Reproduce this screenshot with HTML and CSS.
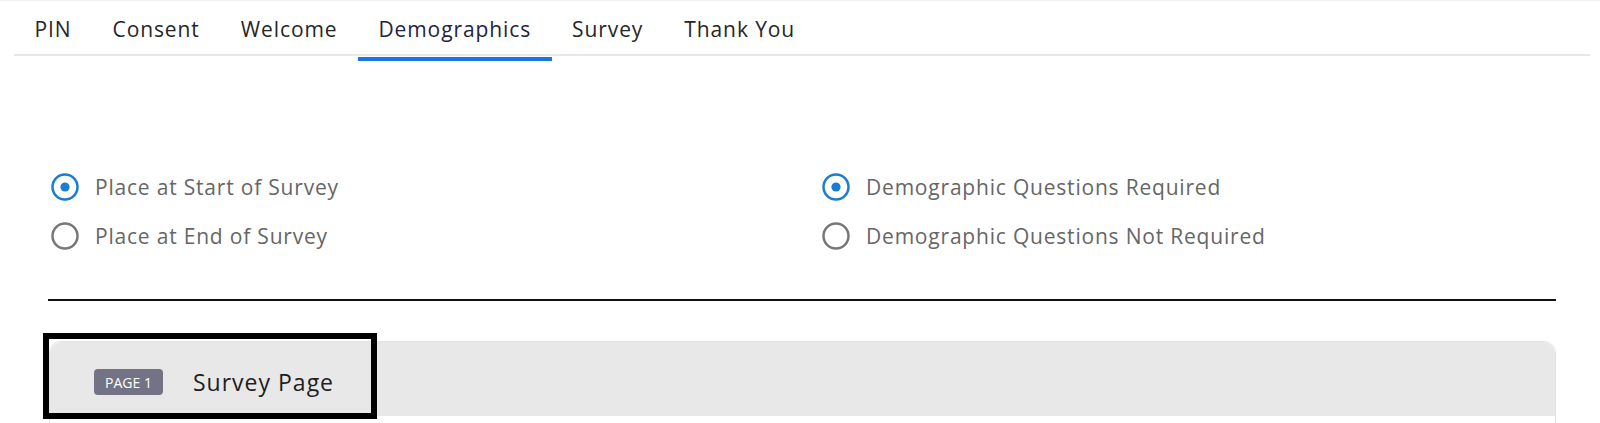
FILE: index.html
```html
<!DOCTYPE html>
<html>
<head>
<meta charset="utf-8">
<link rel="stylesheet" href="styles.css">
</head>
<body>
<div class="page">
  <nav class="tabs">
    <div class="tab">PIN</div>
    <div class="tab">Consent</div>
    <div class="tab">Welcome</div>
    <div class="tab active">Demographics</div>
    <div class="tab">Survey</div>
    <div class="tab">Thank You</div>
  </nav>
  <main class="content">
    <div class="options">
      <div class="col">
        <label class="opt">
          <svg class="radio" width="28" height="28" viewBox="0 0 28 28"><circle cx="14" cy="14" r="12.5" fill="#fff" stroke="#1a7dd0" stroke-width="2.5"/><circle cx="14" cy="14" r="4.6" fill="#1a7dd0"/></svg>
          <span>Place at Start of Survey</span>
        </label>
        <label class="opt">
          <svg class="radio" width="28" height="28" viewBox="0 0 28 28"><circle cx="14" cy="14" r="12.5" fill="#fff" stroke="#777" stroke-width="2.5"/></svg>
          <span>Place at End of Survey</span>
        </label>
      </div>
      <div class="col">
        <label class="opt">
          <svg class="radio" width="28" height="28" viewBox="0 0 28 28"><circle cx="14" cy="14" r="12.5" fill="#fff" stroke="#1a7dd0" stroke-width="2.5"/><circle cx="14" cy="14" r="4.6" fill="#1a7dd0"/></svg>
          <span>Demographic Questions Required</span>
        </label>
        <label class="opt">
          <svg class="radio" width="28" height="28" viewBox="0 0 28 28"><circle cx="14" cy="14" r="12.5" fill="#fff" stroke="#777" stroke-width="2.5"/></svg>
          <span>Demographic Questions Not Required</span>
        </label>
      </div>
    </div>
    <hr class="divider">
    <section class="card">
      <div class="card-head">
        <span class="badge">PAGE 1</span>
        <span class="card-title">Survey Page</span>
      </div>
      <div class="card-body"></div>
      <div class="highlight"></div>
    </section>
  </main>
</div>
</body>
</html>
```
FILE: styles.css
```css
html, body {
  margin: 0;
  padding: 0;
  background: #fff;
}
body {
  font-family: "Open Sans", "Liberation Sans", sans-serif;
  border-top: 1px solid #f0f0f0;
  height: 422px;
  overflow: hidden;
}
.page {
  width: 1600px;
}
.tabs {
  display: flex;
  margin: 0 10px 0 14px;
  height: 53px;
  border-bottom: 2px solid #e8e8e8;
}
.tab {
  position: relative;
  display: flex;
  align-items: center;
  padding: 2px 20.5px 0;
  font-size: 21px;
  color: #262626;
  letter-spacing: 0.9px;
}
.tab.active {
  color: #23233f;
}
.tab.active::after {
  content: "";
  position: absolute;
  left: 0;
  right: 0;
  bottom: -7px;
  height: 4px;
  background: #1b74e4;
}
.content {
  padding: 0 44px 0 48px;
}
.options {
  display: grid;
  grid-template-columns: 771px 1fr;
  margin-top: 106px;
  padding-left: 3px;
}
.opt {
  display: flex;
  align-items: center;
  height: 49px;
  gap: 16px;
  font-size: 21px;
  letter-spacing: 0.8px;
  color: #666;
}
.radio {
  flex: none;
}
.divider {
  margin: 39px 0 0;
  border: none;
  border-top: 2px solid #111;
}
.card {
  position: relative;
  margin-top: 40px;
  margin-left: 1px;
  border: 1px solid #e3e3e3;
  border-radius: 12px 12px 0 0;
}
.card-head {
  display: flex;
  align-items: center;
  gap: 30px;
  height: 74px;
  padding: 6px 0 0 44px;
  box-sizing: border-box;
  background: #e8e8e8;
  border-radius: 12px 12px 0 0;
}
.badge {
  display: inline-flex;
  align-items: center;
  justify-content: center;
  width: 69px;
  height: 26px;
  border-radius: 4px;
  background: #737385;
  color: #fff;
  font-size: 14px;
}
.card-title {
  font-size: 23px;
  letter-spacing: 1px;
  color: #1e1e1e;
}
.card-body {
  height: 8px;
  background: #fff;
}
.highlight {
  position: absolute;
  left: -7px;
  top: -9px;
  width: 322px;
  height: 74px;
  border: 6px solid #000;
}
```
